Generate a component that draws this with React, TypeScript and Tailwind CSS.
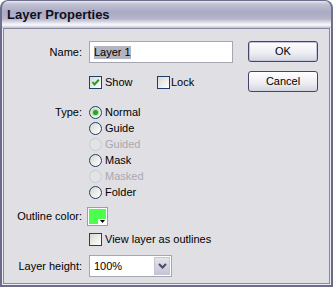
import React from "react";

function Check({ checked }: { checked?: boolean }) {
  return (
    <span className="relative block w-[13px] h-[13px] shrink-0 border border-[#1c3f6e] bg-[linear-gradient(135deg,#d8d8d2,#ffffff)]">
      {checked && (
        <svg className="absolute left-0 top-0" width="11" height="11" viewBox="0 0 11 11">
          <path d="M2.5 5 L4.5 7.5 L8.8 2.8" stroke="#21a121" strokeWidth="2" fill="none" />
        </svg>
      )}
    </span>
  );
}

function Radio({ label, sel, disabled }: { label: string; sel?: boolean; disabled?: boolean }) {
  return (
    <div className="flex items-center h-[16px]">
      <span
        className={
          disabled
            ? "flex items-center justify-center w-[13px] h-[13px] shrink-0 rounded-full border border-[#cbcbd0] bg-[#e3e2e6]"
            : "flex items-center justify-center w-[13px] h-[13px] shrink-0 rounded-full border border-[#1c3f6e] bg-[linear-gradient(135deg,#d8d8d2,#ffffff)]"
        }
      >
        {sel && <span className="block w-[5px] h-[5px] rounded-full bg-[#2aa52a] shadow-[0_0_1px_1px_#9fe09f]" />}
      </span>
      <span className={disabled ? "ml-[3px] text-[#a9a8b0]" : "ml-[3px]"}>{label}</span>
    </div>
  );
}

export default function App() {
  return (
    <div className="w-[333px] h-[287px] flex flex-col bg-white text-[11px] leading-[13px] text-black [font-family:'Liberation_Sans',Arial,sans-serif]">
      <div className="h-[28px] shrink-0 rounded-t-[8px] border-t border-x-2 border-[#6f6f8e] bg-[linear-gradient(to_bottom,#e9e9f0_0px,#c2c2d5_3px,#a9aac4_11px,#b5b6cb_18px,#e6e6ee_22px,#fbfbfd_24px,#d2d2dd_26px,#bcbccc_27px)] flex items-start pl-[5px] pt-[6px]">
        <span className="text-[13px] leading-[16px] font-bold text-[#101020]">Layer Properties</span>
      </div>
      <div className="flex-1 flex flex-col border-x-2 border-b-2 border-[#6b6b8b]">
        <div className="flex-1 flex flex-col border-x border-b border-[#ececf2]">
          <div className="flex-1 flex border border-[#8888a4] bg-[#e0dfe3] pt-[12px]">
            <div className="w-[244px] flex flex-col">
              <div className="flex items-center h-[22px]">
                <div className="w-[78px] text-right">Name:</div>
                <div className="ml-[7px] w-[144px] h-[22px] border border-[#a4a7b0] bg-white flex items-center pl-[4px]">
                  <span className="bg-[#b2b4c2]">Layer 1</span>
                </div>
              </div>
              <div className="flex items-center h-[13px] mt-[13px] pl-[85px]">
                <div className="w-[68px] flex items-center">
                  <Check checked />
                  <span className="ml-[3px]">Show</span>
                </div>
                <div className="flex items-center">
                  <Check />
                  <span className="ml-[1px]">Lock</span>
                </div>
              </div>
              <div className="flex mt-[15px]">
                <div className="w-[78px] h-[16px] flex items-center justify-end">Type:</div>
                <div className="ml-[7px] flex flex-col">
                  <Radio label="Normal" sel />
                  <Radio label="Guide" />
                  <Radio label="Guided" disabled />
                  <Radio label="Mask" />
                  <Radio label="Masked" disabled />
                  <Radio label="Folder" />
                </div>
              </div>
              <div className="flex items-center mt-[7px] h-[19px]">
                <div className="w-[78px] text-right">Outline color:</div>
                <div className="ml-[5px] relative w-[21px] h-[19px] border border-[#9d9da3] bg-white p-[1px]">
                  <div className="w-full h-full bg-[#4dff4d]" />
                  <div className="absolute right-[1px] bottom-[1px] w-[8px] h-[5px] bg-white flex items-center justify-center">
                    <svg width="5" height="3" viewBox="0 0 5 3">
                      <path d="M0 0 H5 L2.5 3 Z" fill="#000" />
                    </svg>
                  </div>
                </div>
              </div>
              <div className="flex items-center h-[13px] mt-[7px] pl-[85px]">
                <Check />
                <span className="ml-[3px]">View layer as outlines</span>
              </div>
              <div className="flex items-center mt-[9px] h-[22px]">
                <div className="w-[78px] text-right">Layer height:</div>
                <div className="ml-[7px] w-[83px] h-[22px] border border-[#a4a7b0] bg-white flex items-center">
                  <span className="flex-1 pl-[4px]">100%</span>
                  <div className="w-[16px] h-[18px] mr-[1px] border border-[#c4c4d2] bg-[linear-gradient(to_bottom,#e4e4ec,#c5c5d5)] flex items-center justify-center">
                    <svg width="9" height="6" viewBox="0 0 9 6">
                      <path d="M1 1 L4.5 4.5 L8 1" stroke="#4a4a66" strokeWidth="2" fill="none" />
                    </svg>
                  </div>
                </div>
              </div>
            </div>
            <div className="w-[70px] flex flex-col">
              <button className="h-[21px] w-[70px] rounded-[3px] border border-[#44446a] bg-[linear-gradient(to_bottom,#ffffff,#ececf2_60%,#d4d4e0)] shadow-[inset_0_0_0_1px_#c4c4dc] flex items-center justify-center">
                OK
              </button>
              <button className="mt-[9px] h-[21px] w-[70px] rounded-[3px] border border-[#44446a] bg-[linear-gradient(to_bottom,#ffffff,#ececf2_60%,#d4d4e0)] flex items-center justify-center">
                Cancel
              </button>
            </div>
          </div>
        </div>
      </div>
    </div>
  );
}
